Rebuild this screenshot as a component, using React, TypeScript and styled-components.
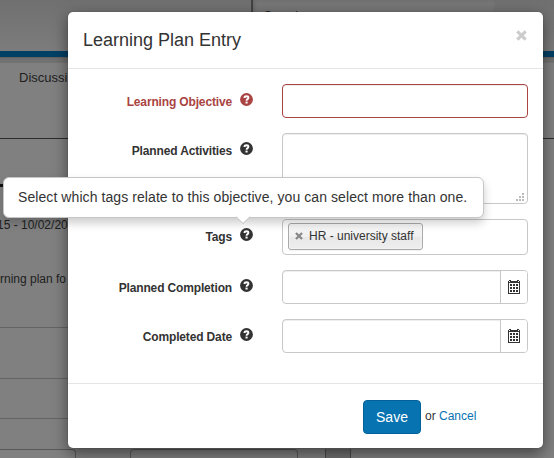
import React from "react";
import styled, { createGlobalStyle, css } from "styled-components";

const Global = createGlobalStyle`
  * { box-sizing: border-box; }
  html, body { margin: 0; padding: 0; overflow: hidden; }
  body {
    font-family: "Liberation Sans", Arial, sans-serif;
    font-size: 12px;
    line-height: 16px;
    color: #333;
  }
`;

const Screen = styled.div`
  position: relative;
  width: 554px;
  height: 458px;
  overflow: hidden;
  background: #808080;
`;

/* Dimmed page behind the dialog */
const Backdrop = styled.div`
  display: flex;
  flex-direction: column;
  height: 100%;
  color: #202020;
  white-space: nowrap;
`;

const Masthead = styled.header`
  display: flex;
  flex: none;
  height: 51px;
  padding-left: 251px;
  background: linear-gradient(#707070, #7c7c7c);
`;

const SearchBox = styled.div`
  width: 245px;
  height: 36px;
  padding: 8px 0 0 11px;
  border-left: 2px solid #424242;
  background: #777;
  box-shadow: inset 2px 0 3px #6b6b6b, inset -1px 0 3px #707070;
`;

const BlueBar = styled.div`
  flex: none;
  height: 12px;
  border-top: 6px solid #034066;
  background: linear-gradient(#626262 0 1px, #6e6e6e 1px, #747474);
`;

const NavStrip = styled.div`
  flex: none;
  height: 76px;
  padding: 7px 0 0 19px;
  font-size: 13px;
  border-bottom: 1px solid #2b2b2b;
`;

const SectionRule = styled.div`
  flex: none;
  width: 80px;
  height: 48px;
  border-bottom: 3px solid #111;
`;

const Entry = styled.div<{ $height: number; $top?: number }>`
  flex: none;
  width: 100px;
  height: ${(p) => p.$height}px;
  padding-top: ${(p) => p.$top ?? 0}px;
  border-bottom: 1px solid #646464;
`;

const EntryText = styled.div<{ $shift?: number }>`
  margin: 0 0 38px ${(p) => p.$shift ?? 0}px;
`;

const BottomRow = styled.div`
  display: flex;
  flex: none;
  height: 10px;
  margin-top: 30px;
`;

const GhostField = styled.div<{ $width: number; $gap: number; $cut?: boolean }>`
  width: ${(p) => p.$width}px;
  height: 16px;
  margin-right: ${(p) => p.$gap}px;
  border: 1px solid #585858;
  border-left-width: ${(p) => (p.$cut ? 0 : 1)}px;
  border-radius: ${(p) => (p.$cut ? "0 4px 0 0" : "4px 4px 0 0")};
`;

const GhostColumn = styled.div`
  width: 26px;
  border: solid #4b4b4b;
  border-width: 0 1px;
  background: #707070;
`;

/* Dialog */
const Dialog = styled.section`
  position: absolute;
  left: 68px;
  top: 12px;
  width: 475px;
  height: 436px;
  display: flex;
  flex-direction: column;
  background: #fff;
  border-radius: 5px;
  box-shadow: 0 5px 15px rgba(0, 0, 0, 0.5), 0 0 1px rgba(0, 0, 0, 0.4);
`;

const DialogHeader = styled.header`
  display: flex;
  justify-content: space-between;
  height: 57px;
  padding: 16px 16px 0 15px;
  border-bottom: 1px solid #e5e5e5;
`;

const Title = styled.h4`
  margin: 0;
  font-size: 18px;
  font-weight: 400;
  line-height: 24px;
`;

const CloseButton = styled.button`
  width: 11px;
  height: 11px;
  margin-top: 2px;
  padding: 0;
  border: 0;
  background: none;
  svg { display: block; }
`;

const Form = styled.form`
  display: flex;
  flex-direction: column;
  gap: 15px;
  height: 315px;
  padding: 15px;
  border-bottom: 1px solid #e5e5e5;
`;

const Row = styled.div<{ $invalid?: boolean }>`
  display: grid;
  grid-template-columns: 149px 50px 246px;
  color: ${(p) => (p.$invalid ? "#a94442" : "#333")};
`;

const Label = styled.label`
  padding: 10px 0 0;
  font-weight: 700;
  text-align: right;
  letter-spacing: -0.15px;
  white-space: nowrap;
`;

const HelpMark = styled.span`
  display: block;
  height: 13px;
  margin: 9px 0 0 8px;
  svg { display: block; }
`;

const fieldBox = css`
  display: block;
  width: 246px;
  margin: 0;
  padding: 0 8px;
  border: 1px solid #c8c8c8;
  border-radius: 4px;
  outline: 0;
  background: #fff;
  box-shadow: inset 0 1px 1px rgba(0, 0, 0, 0.075);
`;

const Input = styled.input<{ $invalid?: boolean }>`
  ${fieldBox}
  height: 34px;
  border-color: ${(p) => (p.$invalid ? "#a94442" : "#c8c8c8")};
`;

const TextBox = styled.div`
  ${fieldBox}
  display: flex;
  align-items: flex-end;
  justify-content: flex-end;
  height: 71px;
  padding: 0 3px 2px 0;
`;

const TagField = styled.div`
  ${fieldBox}
  display: flex;
  height: 36px;
  padding: 3px 5px;
  box-shadow: none;
`;

const Tag = styled.span`
  display: flex;
  align-items: center;
  gap: 6px;
  width: 135px;
  height: 27px;
  padding: 0 0 2px 6px;
  border: 1px solid #aaa;
  border-radius: 3px;
  background: linear-gradient(#f4f4f4 20%, #f0f0f0 50%, #e8e8e8 52%, #eee);
  box-shadow: 0 0 2px #fff inset, 0 1px 0 rgba(0, 0, 0, 0.05);
  white-space: nowrap;
`;

const DateGroup = styled.div`
  ${fieldBox}
  display: flex;
  height: 34px;
  padding: 0;
  overflow: hidden;
`;

const DateInput = styled.input`
  flex: 1;
  min-width: 0;
  border: 0;
  outline: 0;
  background: transparent;
`;

const DateButton = styled.span`
  width: 27px;
  padding: 9px 0 0 7px;
  border-left: 1px solid #c8c8c8;
  background: #fff;
  svg { display: block; }
`;

const DialogFooter = styled.footer`
  display: flex;
  align-items: flex-start;
  padding: 16px 0 0 295px;
  white-space: pre;
`;

const SaveButton = styled.button`
  width: 58px;
  height: 34px;
  margin-right: 4px;
  padding: 0;
  border: 1px solid #05619a;
  border-radius: 4px;
  background: #0873b1;
  color: #fff;
  font: 14px/32px "Liberation Sans", Arial, sans-serif;
`;

const FooterText = styled.span`
  padding-top: 8px;
`;

const CancelLink = styled.a`
  color: #0873b1;
`;

const Popover = styled.div`
  position: absolute;
  left: 3px;
  top: 177px;
  width: 481px;
  height: 41px;
  padding: 9px 14px;
  border: 1px solid #c6c6c6;
  border-radius: 6px;
  background: #fff;
  box-shadow: 0 5px 10px rgba(0, 0, 0, 0.2);
  font-size: 14px;
  line-height: 20px;
  letter-spacing: 0.078px;
  white-space: nowrap;
`;

const PopoverTip = styled.svg`
  position: absolute;
  left: 231px;
  top: 38px;
`;

const HelpIcon = () => (
  <HelpMark>
    <svg width="13" height="13" viewBox="0 0 13 13">
      <circle cx="6.5" cy="6.5" r="6.4" fill="currentColor" />
      <path
        d="M4.5 5V4.7Q4.6 3.2 6.5 3.2Q8.4 3.2 8.4 4.7Q8.4 5.5 7.5 6.1Q6.6 6.6 6.6 7.8"
        fill="none"
        stroke="#fff"
        strokeWidth="1.9"
      />
      <rect x="5.5" y="8.6" width="2.1" height="1.9" fill="#fff" />
    </svg>
  </HelpMark>
);

const CrossIcon = ({ size, color }: { size: number; color: string }) => (
  <svg width={size} height={size} viewBox="0 0 10 10">
    <path d="M1.2 1.2 8.8 8.8M8.8 1.2 1.2 8.8" stroke={color} strokeWidth="2.8" />
  </svg>
);

const CalendarIcon = () => (
  <svg width="12" height="14" viewBox="0 0 12 14" shapeRendering="crispEdges">
    <path
      fill="#333"
      fillRule="evenodd"
      d="M1 0h2v1h6V0h2v1h1v13H0V1h1ZM1 1v1h1V1ZM10 1v1h1V1ZM1 3v10h10V3Z"
    />
    <path
      fill="#333"
      d="M2 4h2v2H2ZM5 4h2v2H5ZM8 4h2v2H8ZM2 7h2v2H2ZM5 7h2v2H5ZM8 7h2v2H8ZM2 10h2v2H2ZM5 10h2v2H5ZM8 10h2v2H8Z"
    />
  </svg>
);

const ResizeGrip = () => (
  <svg width="8" height="8" viewBox="0 0 8 8" shapeRendering="crispEdges">
    <path
      fill="#bbb"
      d="M6 0h2v2H6ZM3 3h2v2H3ZM6 3h2v2H6ZM0 6h2v2H0ZM3 6h2v2H3ZM6 6h2v2H6Z"
    />
  </svg>
);

type FieldProps = { label: string; invalid?: boolean; children: React.ReactNode };

const Field = ({ label, invalid, children }: FieldProps) => (
  <Row $invalid={invalid}>
    <Label>{label}</Label>
    <HelpIcon />
    {children}
  </Row>
);

const DateField = () => (
  <DateGroup>
    <DateInput />
    <DateButton>
      <CalendarIcon />
    </DateButton>
  </DateGroup>
);

export default function App() {
  return (
    <Screen>
      <Global />
      <Backdrop>
        <Masthead>
          <SearchBox>Search</SearchBox>
        </Masthead>
        <BlueBar />
        <NavStrip>Discussi</NavStrip>
        <SectionRule />
        <Entry $height={141} $top={30}>
          <EntryText $shift={-3}>15 - 10/02/20</EntryText>
          <EntryText>rning plan fo</EntryText>
        </Entry>
        <Entry $height={51} />
        <Entry $height={40} />
        <BottomRow>
          <GhostField $width={76} $gap={54} $cut />
          <GhostField $width={168} $gap={27} />
          <GhostColumn />
        </BottomRow>
      </Backdrop>

      <Dialog>
        <DialogHeader>
          <Title>Learning Plan Entry</Title>
          <CloseButton aria-label="Close" type="button">
            <CrossIcon size={11} color="#ccc" />
          </CloseButton>
        </DialogHeader>
        <Form>
          <Field label="Learning Objective" invalid>
            <Input $invalid />
          </Field>
          <Field label="Planned Activities">
            <TextBox>
              <ResizeGrip />
            </TextBox>
          </Field>
          <Field label="Tags">
            <TagField>
              <Tag>
                <CrossIcon size={8} color="#888" />
                HR - university staff
              </Tag>
            </TagField>
          </Field>
          <Field label="Planned Completion">
            <DateField />
          </Field>
          <Field label="Completed Date">
            <DateField />
          </Field>
        </Form>
        <DialogFooter>
          <SaveButton type="button">Save</SaveButton>
          <FooterText>
            or <CancelLink>Cancel</CancelLink>
          </FooterText>
        </DialogFooter>
      </Dialog>

      <Popover>
        Select which tags relate to this objective, you can select more than one.
        <PopoverTip width="16" height="9" viewBox="0 0 16 9">
          <path d="M0 0 8 7.5 16 0Z" fill="#fff" />
          <path d="M1 .7 8 7.5 15 .7" fill="none" stroke="#bbb" />
        </PopoverTip>
      </Popover>
    </Screen>
  );
}
